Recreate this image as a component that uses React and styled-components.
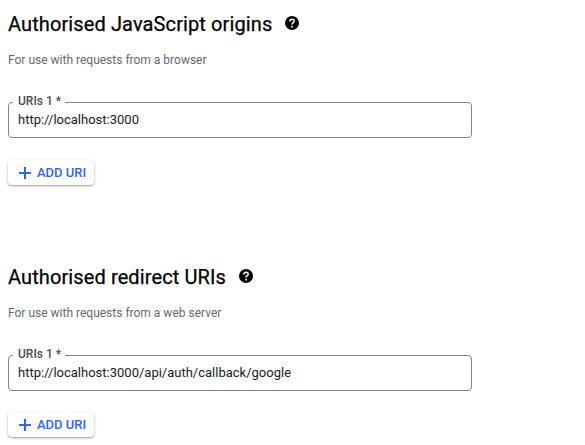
import React from "react";
import styled, { createGlobalStyle } from "styled-components";

const GlobalStyle = createGlobalStyle`
  * { box-sizing: border-box; }
  body { margin: 0; background: #fff; font-family: Roboto, sans-serif; }
`;

const Page = styled.main`
  display: flex;
  flex-direction: column;
  gap: 68px;
  padding: 10px 8px 0;
`;

const Section = styled.section`
  display: flex;
  flex-direction: column;
  align-items: flex-start;
  height: 185px;
`;

const Header = styled.header`
  display: flex;
  align-items: center;
  gap: 13px;
  height: 28px;
`;

const Title = styled.h2`
  margin: 0;
  font-size: 20px;
  font-weight: 400;
  line-height: 28px;
  letter-spacing: 0.11px;
  color: #000;
  -webkit-text-stroke: 0.25px #000;
  white-space: nowrap;
`;

const HelpIcon = styled.svg`
  display: block;
  width: 14px;
  height: 14px;
  margin-top: -2px;
`;

const Hint = styled.p`
  margin: 14px 0 0;
  font-size: 12px;
  line-height: 16px;
  color: #5f6b73;
`;

const Field = styled.div`
  position: relative;
  width: 464px;
  height: 36px;
  margin-top: 34px;
  border: 1px solid #80868b;
  border-radius: 4px;
`;

const Label = styled.label`
  position: absolute;
  top: -10px;
  left: 4px;
  padding: 0 4px 0 5px;
  background: #fff;
  font-size: 12px;
  font-weight: 500;
  line-height: 16px;
  color: #4a4d51;
  white-space: nowrap;
`;

const Input = styled.input`
  display: block;
  width: 100%;
  height: 34px;
  padding: 0 9px 2px;
  border: 0;
  outline: 0;
  background: transparent;
  font: 400 13px/20px Roboto, sans-serif;
  color: #202124;
`;

const AddButton = styled.button`
  display: flex;
  align-items: center;
  gap: 6px;
  width: 86px;
  height: 25px;
  margin-top: ${(p) => p.$offset}px;
  padding: 0 0 0 11px;
  border: 0;
  border-radius: 4px;
  background: #fff;
  box-shadow: 0 1px 3px rgba(0, 0, 0, 0.28), 0 1px 1px rgba(0, 0, 0, 0.14);
  font: 500 13px/24px Roboto, sans-serif;
  color: #3367d6;
  white-space: nowrap;
`;

const PlusIcon = styled.svg`
  display: block;
  flex: none;
  width: 12px;
  height: 12px;
`;

function UriSection({ id, title, hint, value, buttonOffset }) {
  return (
    <Section>
      <Header>
        <Title>{title}</Title>
        <HelpIcon viewBox="0 0 14 14" aria-hidden="true">
          <circle cx="7" cy="7" r="7" />
          <path
            d="M4.8 5.4C4.8 4 5.7 3.3 7 3.3s2.2.8 2.2 1.9C9.2 6.7 7 6.7 7 8.6"
            fill="none"
            stroke="#fff"
            strokeWidth="1.5"
          />
          <path d="M6.2 9.8h1.6v1.6H6.2z" fill="#fff" />
        </HelpIcon>
      </Header>
      <Hint>{hint}</Hint>
      <Field>
        <Label htmlFor={id}>URIs 1 *</Label>
        <Input id={id} defaultValue={value} spellCheck={false} />
      </Field>
      <AddButton type="button" $offset={buttonOffset}>
        <PlusIcon viewBox="0 0 12 12" aria-hidden="true">
          <path d="M5 0h2v5h5v2H7v5H5V7H0V5h5z" fill="#3367d6" />
        </PlusIcon>
        ADD URI
      </AddButton>
    </Section>
  );
}

export default function App() {
  return (
    <>
      <GlobalStyle />
      <Page>
        <UriSection
          id="origin-uri"
          title="Authorised JavaScript origins"
          hint="For use with requests from a browser"
          value="http://localhost:3000"
          buttonOffset={22}
        />
        <UriSection
          id="redirect-uri"
          title="Authorised redirect URIs"
          hint="For use with requests from a web server"
          value="http://localhost:3000/api/auth/callback/google"
          buttonOffset={21}
        />
      </Page>
    </>
  );
}
